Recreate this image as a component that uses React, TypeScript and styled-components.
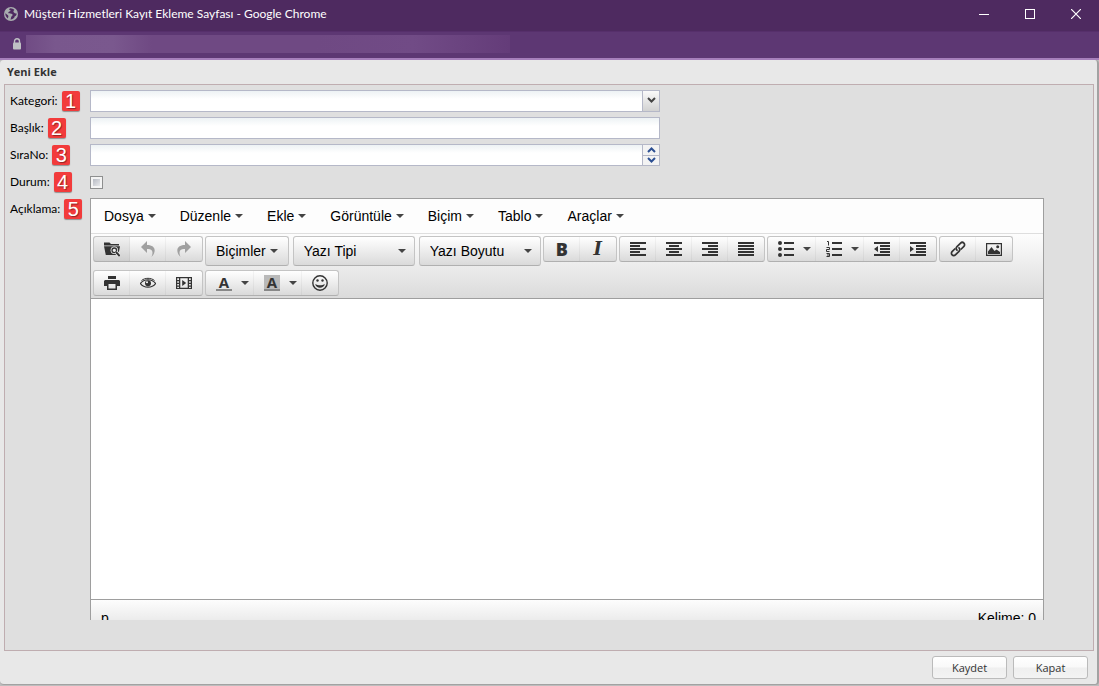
import React from "react";
import styled, { createGlobalStyle } from "styled-components";

const GlobalStyle = createGlobalStyle`
  * { box-sizing: border-box; }
  html, body { margin: 0; padding: 0; }
  button, input, select { font: inherit; color: inherit; margin: 0; border-radius: 0; }
`;

const UI_FONT = `Lato, "Open Sans", sans-serif`;
const EDITOR_FONT = `"Liberation Sans", Arial, sans-serif`;

/* ---------- browser window ---------- */

const Window = styled.div`
  display: flex;
  flex-direction: column;
  min-height: 100vh;
  background: #bdbdbd;
  font-family: ${UI_FONT};
`;

const TitleBar = styled.header`
  display: flex;
  align-items: center;
  height: 31px;
  padding: 0 0 3px 4px;
  background: #4e2a60;
  color: #fff;
`;

const WindowTitle = styled.h1`
  flex: 1;
  margin: 0 0 0 6px;
  font-size: 12px;
  font-weight: 400;
  line-height: 16px;
  white-space: nowrap;
`;

const WindowButton = styled.button`
  display: flex;
  align-items: center;
  justify-content: center;
  width: 46px;
  height: 28px;
  padding: 0;
  border: 0;
  background: transparent;
`;

const AddressBar = styled.div`
  display: flex;
  align-items: center;
  height: 29px;
  padding: 0 12px 2px;
  background: #5d3773;
  border-top: 1px solid #562f6b;
  border-bottom: 2px solid #a67fbb;
`;

const AddressInput = styled.input`
  width: 484px;
  height: 18px;
  margin-left: 4px;
  padding: 0;
  border: 0;
  outline: 0;
  background: linear-gradient(90deg, #704b84 0, #79578d 6%, #7a588e 18%, #6f4983 26%, #6f4983 60%, #714b86 80%, #643c79 100%);
`;

const Page = styled.main`
  display: flex;
  flex: 1;
  flex-direction: column;
  margin-bottom: 1px;
  padding: 0 3px 5px 4px;
  background: #e8e8e8;
  border: 1px solid #a2a2a2;
  border-width: 0 2px 1px 0;
  border-radius: 4px;
`;

const PageTitle = styled.h2`
  margin: 0;
  padding: 4px 3px;
  color: #333;
  font-family: "Open Sans", sans-serif;
  font-size: 11px;
  font-weight: 700;
  line-height: 16px;
`;

const FormPanel = styled.form`
  display: flex;
  flex: 1;
  flex-direction: column;
  gap: 5px;
  padding: 5px 49px 30px 5px;
  border: 1px solid #bfadb0;
  background: #dfdfdf;
`;

const Footer = styled.footer`
  display: flex;
  justify-content: flex-end;
  gap: 6px;
  padding: 5px 6px 0;
`;

const DialogButton = styled.button`
  width: 75px;
  height: 23px;
  padding: 0;
  border: 1px solid #bbb;
  border-radius: 3px;
  background: linear-gradient(#fff, #f9f9f9 48%, #efefef 52%, #f3f3f3);
  color: #333;
  font-family: "Open Sans", sans-serif;
  font-size: 11px;
  line-height: 16px;
`;

/* ---------- form rows ---------- */

const Row = styled.div<{ $grow?: boolean }>`
  display: flex;
  min-height: 22px;
  ${(p) => p.$grow && "flex: 1; min-height: 0;"}
`;

const LabelCell = styled.div`
  display: flex;
  flex: none;
  align-items: center;
  gap: 4px;
  width: 80px;
  height: 22px;
`;

const Label = styled.label`
  color: #000;
  font-size: 12px;
  line-height: 16px;
  white-space: nowrap;
`;

const Badge = styled.span`
  display: flex;
  align-items: center;
  justify-content: center;
  flex: none;
  width: 18px;
  height: 20px;
  border-radius: 2px;
  background: #f23b3b;
  box-shadow: 0 1px 1px rgba(0, 0, 0, 0.35);
  color: #fff;
  font-family: ${EDITOR_FONT};
  font-size: 20px;
  line-height: 20px;
  text-shadow: 1px 1px 1px rgba(0, 0, 0, 0.4);
`;

const Field = styled.div`
  position: relative;
  display: flex;
  flex: 0 1 570px;
  height: 22px;
  border: 1px solid #b5b8c8;
  background: linear-gradient(#edf2f4, #fff 8px);
  font-size: 12px;
`;

const TextInput = styled.input`
  flex: 1;
  min-width: 0;
  padding: 0 4px;
  border: 0;
  outline: 0;
  background: transparent;
  appearance: textfield;
  &::-webkit-inner-spin-button { display: none; }
`;

const SelectInput = styled.select`
  flex: 1;
  min-width: 0;
  padding: 0 20px 0 4px;
  border: 0;
  outline: 0;
  background: transparent;
  appearance: none;
`;

const SelectTrigger = styled.span`
  position: absolute;
  top: 0;
  right: 0;
  display: flex;
  justify-content: center;
  width: 17px;
  height: 20px;
  padding-top: 6px;
  border-left: 1px solid #b5b8c8;
  background: linear-gradient(#fafafa, #d2d2d2);
  pointer-events: none;
`;

const Spinner = styled.div`
  display: flex;
  flex-direction: column;
  width: 17px;
  border-left: 1px solid #b5b8c8;
`;

const SpinnerButton = styled.button`
  display: flex;
  flex: 1;
  align-items: center;
  justify-content: center;
  padding: 0;
  border: 0;
  background: #f3f3f3;
  & + & { border-top: 1px solid #b5b8c8; }
`;

const CheckBox = styled.input`
  width: 13px;
  height: 13px;
  margin: 5px 0 0;
  appearance: none;
  border: 1px solid #8e8f8f;
  background: linear-gradient(135deg, #a9adb8, #f6f6f6);
  box-shadow: inset 0 0 0 2px #f4f4f4;
  &:checked { background: #4a5a80; }
`;

/* ---------- rich text editor ---------- */

const EditorClip = styled.div`
  flex: 1;
  height: 422px;
  min-width: 0;
  overflow: hidden;
`;

const Editor = styled.div`
  border: 1px solid #9e9e9e;
  background: #fff;
  color: #000;
  font-family: ${EDITOR_FONT};
  font-size: 14px;
  line-height: 20px;
`;

const MenuBar = styled.nav`
  display: flex;
  height: 35px;
  padding: 0 1px;
  background: #fdfdfd;
  border-bottom: 1px solid #dedede;
`;

const MenuButton = styled.button`
  display: flex;
  align-items: center;
  gap: 4px;
  padding: 0 12px;
  border: 0;
  background: transparent;
  white-space: nowrap;
`;

const ToolBar = styled.div`
  display: flex;
  flex-wrap: wrap;
  align-items: flex-start;
  gap: 4px 2px;
  padding: 2px 2px 2px;
  background: linear-gradient(#fdfdfd, #dbdbdb);
  border-bottom: 1px solid #9e9e9e;
`;

const buttonFace = `
  border: 1px solid #c4c4c4;
  border-bottom-color: #b0b0b0;
  border-radius: 3px;
  background: linear-gradient(#fff, #dadada);
`;

const Group = styled.div`
  display: flex;
  height: 26px;
  ${buttonFace}
`;

const ListGroup = styled.div`
  display: flex;
  gap: 4px;
`;

const ToolButton = styled.button<{ $split?: boolean; $active?: boolean }>`
  display: flex;
  align-items: center;
  justify-content: ${(p) => (p.$split ? "flex-start" : "center")};
  gap: 9px;
  width: ${(p) => (p.$split ? 48 : 36)}px;
  padding: 0 0 0 ${(p) => (p.$split ? 10 : 0)}px;
  border: 0;
  background: ${(p) => (p.$active ? "rgba(0, 0, 0, 0.05)" : "transparent")};
  color: #333;
  & + & { box-shadow: -1px 0 0 rgba(0, 0, 0, 0.04); }
  &:disabled { color: #a0a0a0; }
`;

const FormatsButton = styled.button`
  display: flex;
  align-items: center;
  gap: 4px;
  height: 30px;
  padding: 0 10px;
  ${buttonFace}
`;

const ListBox = styled.div`
  position: relative;
  display: flex;
  width: 122px;
  height: 30px;
  ${buttonFace}
`;

const ListSelect = styled.select`
  flex: 1;
  min-width: 0;
  padding: 0 20px 0 10px;
  border: 0;
  outline: 0;
  appearance: none;
  background: transparent;
`;

const ListCaret = styled.span`
  position: absolute;
  top: 12px;
  right: 8px;
  display: flex;
  pointer-events: none;
`;

const Bold = styled.b`
  font-family: "Open Sans", sans-serif;
  font-size: 18px;
  font-weight: 800;
  line-height: 20px;
`;

const Italic = styled.i`
  font-family: "DejaVu Serif", serif;
  font-size: 18px;
  font-weight: 700;
  line-height: 20px;
`;

const ColorLetter = styled.span<{ $filled?: boolean }>`
  width: 16px;
  height: 16px;
  border-bottom: 2px solid #888;
  background: ${(p) => (p.$filled ? "#b9b9b9" : "transparent")};
  font-family: "Open Sans", sans-serif;
  font-size: 15px;
  font-weight: 700;
  line-height: 14px;
  text-align: center;
`;

const EditArea = styled.div`
  height: 300px;
  outline: 0;
`;

const StatusBar = styled.div`
  display: flex;
  justify-content: space-between;
  padding: 8px 7px 8px 10px;
  border-top: 1px solid #9e9e9e;
  background: linear-gradient(#fdfdfd, #dedede);
`;

/* ---------- icons ---------- */

const Caret = () => (
  <svg width="8" height="4" viewBox="0 0 8 4" fill="#444">
    <path d="M0 0h8L4 4z" />
  </svg>
);

const Svg = ({ children }: { children: React.ReactNode }) => (
  <svg width="16" height="16" viewBox="0 0 16 16" fill="currentColor">
    {children}
  </svg>
);

const Bars = ({ bars }: { bars: [number, number][] }) => (
  <>
    {bars.map(([x, w], i) => (
      <rect key={i} x={x} y={1 + i * 3} width={w} height="2" />
    ))}
  </>
);

const BrowseIcon = () => (
  <Svg>
    <path d="M0 1.500h5.500L7 3h8v1.500H0zM0 5.200h16L15.300 9l-.5 2L13 14H1.800z" />
    <circle cx="10.300" cy="9.300" r="3.700" fill="#eee" />
    <circle cx="10.300" cy="9.300" r="2.300" fill="none" stroke="#333" strokeWidth="1.300" />
    <path d="M12 11l3.600 4" stroke="#eee" strokeWidth="3.600" />
    <path d="M12 11l3.600 4" stroke="#333" strokeWidth="1.900" />
  </Svg>
);
const UndoIcon = () => (
  <Svg>
    <path d="M7 4V0L1 6l6 6V8c5-.4 6.800 2 4.500 8 5-5 4.500-12-4.500-12z" />
  </Svg>
);
const RedoIcon = () => (
  <Svg>
    <path d="M9 4V0l6 6-6 6V8c-5-.4-6.800 2-4.500 8C-.5 11 0 4 9 4z" />
  </Svg>
);
const BulletIcon = () => (
  <Svg>
    <circle cx="2" cy="2" r="2" />
    <circle cx="2" cy="8" r="2" />
    <circle cx="2" cy="14" r="2" />
    <path d="M6 1h10v2H6zM6 7h10v2H6zM6 13h10v2H6z" />
  </Svg>
);
const NumberIcon = () => (
  <Svg>
    <g fill="none" stroke="currentColor">
      <path d="M1 .5h1.500v4M.5 6.500h3v2h-3v2h3M.5 12.500h3v3h-3M1 14h2.500" />
    </g>
    <path d="M6 1h10v2H6zM6 7h10v2H6zM6 13h10v2H6z" />
  </Svg>
);
const OutdentIcon = () => (
  <Svg>
    <path d="M0 1h16v2H0zM6 4h10v2H6zM6 7h10v2H6zM6 10h10v2H6zM0 13h16v2H0zM4 5v6L0 8z" />
  </Svg>
);
const IndentIcon = () => (
  <Svg>
    <path d="M0 1h16v2H0zM6 4h10v2H6zM6 7h10v2H6zM6 10h10v2H6zM0 13h16v2H0zM0 5v6l4-3z" />
  </Svg>
);
const LinkIcon = () => (
  <Svg>
    <g fill="none" stroke="currentColor" strokeWidth="1.700" strokeLinecap="round">
      <path d="M7 9.200a2.500 2.500 0 0 1 0-3.500l3.600-3.600a2.300 2.300 0 0 1 3.300 3.300l-2.600 2.600" />
      <path d="M9 6.800a2.500 2.500 0 0 1 0 3.500l-3.600 3.600a2.300 2.300 0 0 1-3.300-3.300l2.600-2.600" />
    </g>
  </Svg>
);
const ImageIcon = () => (
  <Svg>
    <path fillRule="evenodd" d="M0 2h16v13H0zM1.200 3.200v10.600h13.600V3.200z" />
    <path d="M2 13V10.500L5.500 6l3 4L10.500 8.500 14 11v2z" />
    <circle cx="11.700" cy="5.700" r="1.500" />
  </Svg>
);
const PrintIcon = () => (
  <Svg>
    <path d="M4 1h8v3H4zM1 5h14l1 1v5h-3V8H3v3H0V6z" />
    <path fillRule="evenodd" d="M3 8h10v7H3zM4.500 9v4.500h7V9z" />
  </Svg>
);
const EyeIcon = () => (
  <Svg>
    <path d="M.4 8.500C4 3.500 12 3.500 15.600 8.500 12 13.300 4 13.300.4 8.500z" fill="none" stroke="currentColor" strokeWidth="1.200" />
    <path d="M1.500 5.500C5 2.600 11 2.600 14.500 5.500" fill="none" stroke="currentColor" strokeWidth="1" />
    <circle cx="8" cy="8.200" r="3" />
    <circle cx="7" cy="7.200" r="1" fill="#fff" />
  </Svg>
);
const MediaIcon = () => (
  <Svg>
    <path
      fillRule="evenodd"
      d="M0 2h16v12H0zM4.300 3.300v9.400h7.400V3.300zM1.200 3.300v1.700h1.800V3.300zM1.200 6.200v1.600h1.800V6.200zM1.200 9v1.600h1.800V9zM1.200 11.700v1.200h1.800v-1.200zM13 3.300v1.700h1.800V3.300zM13 6.200v1.600h1.800V6.200zM13 9v1.600h1.800V9zM13 11.700v1.200h1.800v-1.200z"
    />
    <path d="M6.200 5v6l4-3z" />
  </Svg>
);
const SmileIcon = () => (
  <Svg>
    <circle cx="8" cy="8" r="7.200" fill="none" stroke="currentColor" strokeWidth="1.400" />
    <circle cx="5.500" cy="5.500" r="1.200" />
    <circle cx="10.500" cy="5.500" r="1.200" />
    <path d="M3.200 9c1 5 8.600 5 9.600 0-2.500 1.800-7 1.800-9.600 0z" />
  </Svg>
);
const GlobeIcon = () => (
  <svg width="14" height="14" viewBox="0 0 14 14">
    <circle cx="7" cy="7" r="7" fill="#a9adaf" />
    <path
      d="M6.500 1.300c-2 .4-1.600 2 .2 2.300-.5 1.300-2.300.9-2.500 2.300 1.200.9 3 .1 4 1.100.9 1.100.1 2-.8 2.600-.5.900-.3 2-1 3C8.800 12.500 10.500 11 10.800 9.300c1.200-.3 1.800-1.400 1.900-2.800-1.100.3-2.100 0-2.700-.9-1-.7-.6-1.900.4-2.500C9.400 2 8 1.300 6.500 1.300zM1.300 6.300c1 .9 2.400 1.300 3 2.400.3 1.100-.4 1.600-.3 2.700C2.300 10.400 1.200 8.600 1.300 6.300z"
      fill="#4e2a60"
    />
  </svg>
);
const LockIcon = () => (
  <svg width="10" height="12" viewBox="0 0 10 12">
    <path d="M2.500 5V3.300a2.500 2.500 0 0 1 5 0V5" fill="none" stroke="#bfc0c4" strokeWidth="1.400" />
    <rect x="1" y="4.500" width="8" height="7" rx="1" fill="#bfc0c4" />
  </svg>
);
const Chevron = ({ up, color }: { up?: boolean; color: string }) => (
  <svg width="9" height="6" viewBox="0 0 9 6" fill="none" stroke={color} strokeWidth="2">
    <path d={up ? "M1 5l3.500-3.500L8 5" : "M1 1l3.500 3.500L8 1"} />
  </svg>
);

/* ---------- screen ---------- */

const menus = ["Dosya", "Düzenle", "Ekle", "Görüntüle", "Biçim", "Tablo", "Araçlar"];

type Tool = { name: string; icon: React.ReactNode; split?: boolean; active?: boolean; disabled?: boolean };

const fileTools: Tool[] = [
  { name: "Dosya Yöneticisi", icon: <BrowseIcon />, active: true },
  { name: "Geri Al", icon: <UndoIcon />, disabled: true },
  { name: "Yinele", icon: <RedoIcon />, disabled: true },
];
const styleTools: Tool[] = [
  { name: "Kalın", icon: <Bold>B</Bold> },
  { name: "İtalik", icon: <Italic>I</Italic> },
];
const alignTools: Tool[] = [
  { name: "Sola Hizala", icon: <Svg><Bars bars={[[0, 16], [0, 10], [0, 16], [0, 10], [0, 16]]} /></Svg> },
  { name: "Ortala", icon: <Svg><Bars bars={[[0, 16], [3, 10], [0, 16], [3, 10], [0, 16]]} /></Svg> },
  { name: "Sağa Hizala", icon: <Svg><Bars bars={[[0, 16], [6, 10], [0, 16], [6, 10], [0, 16]]} /></Svg> },
  { name: "İki Yana Yasla", icon: <Svg><Bars bars={[[0, 16], [0, 16], [0, 16], [0, 16], [0, 16]]} /></Svg> },
];
const listTools: Tool[] = [
  { name: "Madde Listesi", icon: <BulletIcon />, split: true },
  { name: "Numaralı Liste", icon: <NumberIcon />, split: true },
  { name: "Girintiyi Azalt", icon: <OutdentIcon /> },
  { name: "Girintiyi Artır", icon: <IndentIcon /> },
];
const insertTools: Tool[] = [
  { name: "Bağlantı", icon: <LinkIcon /> },
  { name: "Resim", icon: <ImageIcon /> },
];
const viewTools: Tool[] = [
  { name: "Yazdır", icon: <PrintIcon /> },
  { name: "Önizleme", icon: <EyeIcon /> },
  { name: "Medya", icon: <MediaIcon /> },
];
const colorTools: Tool[] = [
  { name: "Yazı Rengi", icon: <ColorLetter>A</ColorLetter>, split: true },
  { name: "Arka Plan Rengi", icon: <ColorLetter $filled>A</ColorLetter>, split: true },
  { name: "İfadeler", icon: <SmileIcon /> },
];

const ToolGroup = ({ tools }: { tools: Tool[] }) => (
  <Group>
    {tools.map((t) => (
      <ToolButton key={t.name} type="button" aria-label={t.name} $split={t.split} $active={t.active} disabled={t.disabled}>
        {t.icon}
        {t.split && <Caret />}
      </ToolButton>
    ))}
  </Group>
);

const RowLabel = ({ id, text, step }: { id: string; text: string; step: number }) => (
  <LabelCell>
    <Label htmlFor={id} id={id + "-label"}>{text}</Label>
    <Badge>{step}</Badge>
  </LabelCell>
);

export default function App() {
  return (
    <Window>
      <GlobalStyle />
      <TitleBar>
        <GlobeIcon />
        <WindowTitle>Müşteri Hizmetleri Kayıt Ekleme Sayfası - Google Chrome</WindowTitle>
        <WindowButton type="button" aria-label="Simge durumuna küçült">
          <svg width="10" height="10"><rect y="5" width="10" height="1" fill="#fff" /></svg>
        </WindowButton>
        <WindowButton type="button" aria-label="Ekranı kapla">
          <svg width="10" height="10"><rect x=".5" y=".5" width="9" height="9" fill="none" stroke="#fff" /></svg>
        </WindowButton>
        <WindowButton type="button" aria-label="Pencereyi kapat">
          <svg width="10" height="10"><path d="M0 0l10 10M10 0L0 10" stroke="#fff" strokeWidth="1.200" /></svg>
        </WindowButton>
      </TitleBar>
      <AddressBar>
        <LockIcon />
        <AddressInput type="text" aria-label="Adres" readOnly />
      </AddressBar>

      <Page>
        <PageTitle>Yeni Ekle</PageTitle>
        <FormPanel id="record">
          <Row>
            <RowLabel id="category" text="Kategori:" step={1} />
            <Field>
              <SelectInput id="category"><option value="" /></SelectInput>
              <SelectTrigger><Chevron color="#444" /></SelectTrigger>
            </Field>
          </Row>
          <Row>
            <RowLabel id="title" text="Başlık:" step={2} />
            <Field><TextInput id="title" type="text" /></Field>
          </Row>
          <Row>
            <RowLabel id="order" text="SıraNo:" step={3} />
            <Field>
              <TextInput id="order" type="number" />
              <Spinner>
                <SpinnerButton type="button" aria-label="Artır"><Chevron up color="#2c4f92" /></SpinnerButton>
                <SpinnerButton type="button" aria-label="Azalt"><Chevron color="#2c4f92" /></SpinnerButton>
              </Spinner>
            </Field>
          </Row>
          <Row>
            <RowLabel id="status" text="Durum:" step={4} />
            <CheckBox id="status" type="checkbox" />
          </Row>
          <Row $grow>
            <RowLabel id="description" text="Açıklama:" step={5} />
            <EditorClip>
              <Editor>
                <MenuBar>
                  {menus.map((m) => (
                    <MenuButton key={m} type="button">{m}<Caret /></MenuButton>
                  ))}
                </MenuBar>
                <ToolBar>
                  <ToolGroup tools={fileTools} />
                  <ListGroup>
                    <FormatsButton type="button">Biçimler<Caret /></FormatsButton>
                    <ListBox>
                      <ListSelect aria-label="Yazı Tipi"><option>Yazı Tipi</option></ListSelect>
                      <ListCaret><Caret /></ListCaret>
                    </ListBox>
                    <ListBox>
                      <ListSelect aria-label="Yazı Boyutu"><option>Yazı Boyutu</option></ListSelect>
                      <ListCaret><Caret /></ListCaret>
                    </ListBox>
                  </ListGroup>
                  <ToolGroup tools={styleTools} />
                  <ToolGroup tools={alignTools} />
                  <ToolGroup tools={listTools} />
                  <ToolGroup tools={insertTools} />
                  <ToolGroup tools={viewTools} />
                  <ToolGroup tools={colorTools} />
                </ToolBar>
                <EditArea id="description" role="textbox" aria-labelledby="description-label" contentEditable suppressContentEditableWarning />
                <StatusBar>
                  <span>p</span>
                  <span>Kelime: 0</span>
                </StatusBar>
              </Editor>
            </EditorClip>
          </Row>
        </FormPanel>
        <Footer>
          <DialogButton type="submit" form="record">Kaydet</DialogButton>
          <DialogButton type="button">Kapat</DialogButton>
        </Footer>
      </Page>
    </Window>
  );
}
